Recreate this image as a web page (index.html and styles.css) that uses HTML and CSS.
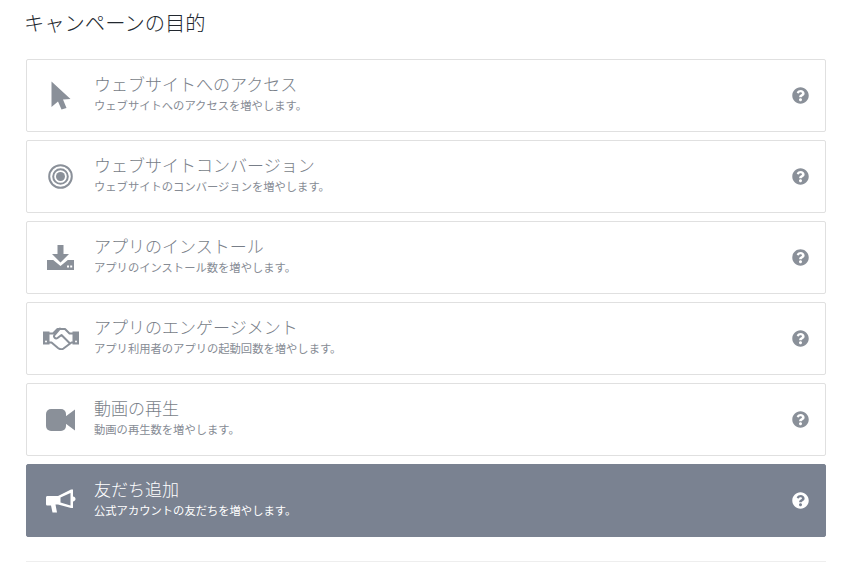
FILE: index.html
```html
<!DOCTYPE html>
<html lang="ja">
<head>
<meta charset="utf-8">
<title>キャンペーンの目的</title>
<link rel="stylesheet" href="styles.css">
</head>
<body>
<main class="page">
  <h1 class="heading">キャンペーンの目的</h1>
  <ul class="list">
    <li class="card">
      <span class="icon"><svg class="cursor" viewBox="0 0 20 29"><path d="M0.500 0.500 L19.500 18 L12 18.500 L15.500 27 L10.500 28.500 L7 20.500 L0.500 26 Z"/></svg></span>
      <div class="text"><div class="name">ウェブサイトへのアクセス</div><div class="desc">ウェブサイトへのアクセスを増やします。</div></div>
      <svg class="help" viewBox="0 0 512 512"><path d="M504 256c0 136.997-111.043 248-248 248S8 392.997 8 256C8 119.083 119.043 8 256 8s248 111.083 248 248zM262.655 90c-54.497 0-89.255 22.957-116.549 63.758-3.536 5.286-2.353 12.415 2.715 16.258l34.699 26.31c5.205 3.947 12.621 3.008 16.665-2.122 17.864-22.658 30.113-35.797 57.303-35.797 20.429 0 45.698 13.148 45.698 32.958 0 14.976-12.363 22.667-32.534 33.976C247.128 238.528 216 254.941 216 296v4c0 6.627 5.373 12 12 12h56c6.627 0 12-5.373 12-12v-1.333c0-28.462 83.186-29.647 83.186-106.667 0-58.002-60.165-102-116.531-102zM256 338c-25.365 0-46 20.635-46 46 0 25.364 20.635 46 46 46s46-20.636 46-46c0-25.365-20.635-46-46-46z"/></svg>
    </li>
    <li class="card">
      <span class="icon"><svg class="target" viewBox="0 0 25 25"><circle class="ring" cx="12.500" cy="12.500" r="11.300"/><circle class="ring" cx="12.500" cy="12.500" r="7.300"/><circle cx="12.500" cy="12.500" r="4.500"/></svg></span>
      <div class="text"><div class="name">ウェブサイトコンバージョン</div><div class="desc">ウェブサイトのコンバージョンを増やします。</div></div>
      <svg class="help" viewBox="0 0 512 512"><path d="M504 256c0 136.997-111.043 248-248 248S8 392.997 8 256C8 119.083 119.043 8 256 8s248 111.083 248 248zM262.655 90c-54.497 0-89.255 22.957-116.549 63.758-3.536 5.286-2.353 12.415 2.715 16.258l34.699 26.31c5.205 3.947 12.621 3.008 16.665-2.122 17.864-22.658 30.113-35.797 57.303-35.797 20.429 0 45.698 13.148 45.698 32.958 0 14.976-12.363 22.667-32.534 33.976C247.128 238.528 216 254.941 216 296v4c0 6.627 5.373 12 12 12h56c6.627 0 12-5.373 12-12v-1.333c0-28.462 83.186-29.647 83.186-106.667 0-58.002-60.165-102-116.531-102zM256 338c-25.365 0-46 20.635-46 46 0 25.364 20.635 46 46 46s46-20.636 46-46c0-25.365-20.635-46-46-46z"/></svg>
    </li>
    <li class="card">
      <span class="icon"><svg class="download" viewBox="0 0 27 25"><path d="M10.500 0h6v9H22L13.500 17.500 5 9h5.500z"/><path fill-rule="evenodd" d="M0 15h6.200l7.300 6 7.300-6H27v10H0zM20 20.500v2h2v-2zM23.200 20.500v2h2v-2z"/></svg></span>
      <div class="text"><div class="name">アプリのインストール</div><div class="desc">アプリのインストール数を増やします。</div></div>
      <svg class="help" viewBox="0 0 512 512"><path d="M504 256c0 136.997-111.043 248-248 248S8 392.997 8 256C8 119.083 119.043 8 256 8s248 111.083 248 248zM262.655 90c-54.497 0-89.255 22.957-116.549 63.758-3.536 5.286-2.353 12.415 2.715 16.258l34.699 26.31c5.205 3.947 12.621 3.008 16.665-2.122 17.864-22.658 30.113-35.797 57.303-35.797 20.429 0 45.698 13.148 45.698 32.958 0 14.976-12.363 22.667-32.534 33.976C247.128 238.528 216 254.941 216 296v4c0 6.627 5.373 12 12 12h56c6.627 0 12-5.373 12-12v-1.333c0-28.462 83.186-29.647 83.186-106.667 0-58.002-60.165-102-116.531-102zM256 338c-25.365 0-46 20.635-46 46 0 25.364 20.635 46 46 46s46-20.636 46-46c0-25.365-20.635-46-46-46z"/></svg>
    </li>
    <li class="card">
      <span class="icon"><svg class="shake" viewBox="0 0 36 23"><path d="M0 4.500h6.500v13H0zM29.500 4.500H36v13h-6.500z"/><path class="line" d="M6 6.500h4L14.500 2h7.500l4.500 4.500H30M6 15.500h2.500l6.500 5.500c2 1.500 4 1.500 5.500.5l8-6h2M17 1.500l-5.500 6.500c-1.500 2 1 4.500 3 3l4-3 7.500 7.500"/><circle class="dot" cx="3" cy="14.500" r="1"/><circle class="dot" cx="33" cy="14.500" r="1"/></svg></span>
      <div class="text"><div class="name">アプリのエンゲージメント</div><div class="desc">アプリ利用者のアプリの起動回数を増やします。</div></div>
      <svg class="help" viewBox="0 0 512 512"><path d="M504 256c0 136.997-111.043 248-248 248S8 392.997 8 256C8 119.083 119.043 8 256 8s248 111.083 248 248zM262.655 90c-54.497 0-89.255 22.957-116.549 63.758-3.536 5.286-2.353 12.415 2.715 16.258l34.699 26.31c5.205 3.947 12.621 3.008 16.665-2.122 17.864-22.658 30.113-35.797 57.303-35.797 20.429 0 45.698 13.148 45.698 32.958 0 14.976-12.363 22.667-32.534 33.976C247.128 238.528 216 254.941 216 296v4c0 6.627 5.373 12 12 12h56c6.627 0 12-5.373 12-12v-1.333c0-28.462 83.186-29.647 83.186-106.667 0-58.002-60.165-102-116.531-102zM256 338c-25.365 0-46 20.635-46 46 0 25.364 20.635 46 46 46s46-20.636 46-46c0-25.365-20.635-46-46-46z"/></svg>
    </li>
    <li class="card">
      <span class="icon"><svg class="video" viewBox="0 0 29 22"><path d="M5 0h10a5 5 0 0 1 5 5v12a5 5 0 0 1-5 5H5a5 5 0 0 1-5-5V5a5 5 0 0 1 5-5z"/><path d="M19.500 7.500L29 .5v21l-9.500-7z"/></svg></span>
      <div class="text"><div class="name">動画の再生</div><div class="desc">動画の再生数を増やします。</div></div>
      <svg class="help" viewBox="0 0 512 512"><path d="M504 256c0 136.997-111.043 248-248 248S8 392.997 8 256C8 119.083 119.043 8 256 8s248 111.083 248 248zM262.655 90c-54.497 0-89.255 22.957-116.549 63.758-3.536 5.286-2.353 12.415 2.715 16.258l34.699 26.31c5.205 3.947 12.621 3.008 16.665-2.122 17.864-22.658 30.113-35.797 57.303-35.797 20.429 0 45.698 13.148 45.698 32.958 0 14.976-12.363 22.667-32.534 33.976C247.128 238.528 216 254.941 216 296v4c0 6.627 5.373 12 12 12h56c6.627 0 12-5.373 12-12v-1.333c0-28.462 83.186-29.647 83.186-106.667 0-58.002-60.165-102-116.531-102zM256 338c-25.365 0-46 20.635-46 46 0 25.364 20.635 46 46 46s46-20.636 46-46c0-25.365-20.635-46-46-46z"/></svg>
    </li>
    <li class="card selected">
      <span class="icon"><svg class="horn" viewBox="0 0 30 24"><path fill-rule="evenodd" d="M0 8.500C0 7.500.7 7 1.500 7H12L25 .5h2V7.500c1.500.3 2.500 1.200 2.500 2.500S28.500 12.200 27 12.500V19h-2l-13-3.500h-2.500L11 23.500H6.500L5 16.500H1.500C.7 16.500 0 16 0 15zM24.500 4l-10 4.500v5l10 3z"/></svg></span>
      <div class="text"><div class="name">友だち追加</div><div class="desc">公式アカウントの友だちを増やします。</div></div>
      <svg class="help" viewBox="0 0 512 512"><path d="M504 256c0 136.997-111.043 248-248 248S8 392.997 8 256C8 119.083 119.043 8 256 8s248 111.083 248 248zM262.655 90c-54.497 0-89.255 22.957-116.549 63.758-3.536 5.286-2.353 12.415 2.715 16.258l34.699 26.31c5.205 3.947 12.621 3.008 16.665-2.122 17.864-22.658 30.113-35.797 57.303-35.797 20.429 0 45.698 13.148 45.698 32.958 0 14.976-12.363 22.667-32.534 33.976C247.128 238.528 216 254.941 216 296v4c0 6.627 5.373 12 12 12h56c6.627 0 12-5.373 12-12v-1.333c0-28.462 83.186-29.647 83.186-106.667 0-58.002-60.165-102-116.531-102zM256 338c-25.365 0-46 20.635-46 46 0 25.364 20.635 46 46 46s46-20.636 46-46c0-25.365-20.635-46-46-46z"/></svg>
    </li>
  </ul>
  <hr class="rule">
</main>
</body>
</html>
```
FILE: styles.css
```css
* { box-sizing: border-box; }
html, body { margin: 0; padding: 0; background: #fff; overflow: hidden; }
body { font-family: "Noto Sans CJK JP", "Liberation Sans", sans-serif; font-weight: 300; }
.page { width: 800px; margin-left: 26px; padding-top: 7px; }
.heading { margin: 0 0 0 -2px; font-size: 20.3px; font-weight: 300; line-height: 30px; color: #22282f; }
.list { list-style: none; margin: 22px 0 0; padding: 0; display: flex; flex-direction: column; gap: 8px; }
.card { height: 73px; display: flex; align-items: center; border: 1px solid #e0e0e0; border-radius: 2px; padding-right: 16px; background: #fff; }
.icon { width: 67px; flex: none; display: flex; justify-content: center; }
.icon svg { display: block; fill: #8a9099; }
.text { flex: 1; min-width: 0; }
.name { font-size: 17px; line-height: 22px; color: #787e88; margin-bottom: 3px; }
.desc { font-size: 11.3px; font-weight: 400; line-height: 14px; color: #868b94; margin-bottom: 6px; }
.help { width: 17px; height: 17px; flex: none; fill: #8a9099; }
.cursor { width: 20px; height: 29px; }
.target { width: 25px; height: 25px; }
.download { width: 27px; height: 25px; }
.shake { width: 36px; height: 23px; }
.video { width: 29px; height: 22px; }
.horn { width: 30px; height: 24px; }
.icon svg .ring { fill: none; stroke: #8a9099; stroke-width: 2; }
.icon svg .line { fill: none; stroke: #8a9099; stroke-width: 2; stroke-linejoin: round; stroke-linecap: round; }
.icon svg .dot { fill: #fff; }
.selected { background: #7a8291; border-color: #7a8291; }
.selected .name, .selected .desc { color: #fff; }
.selected .icon svg, .selected .help { fill: #fff; }
.rule { border: 0; border-top: 1px solid #eee; margin: 24px 0 0; }
```
